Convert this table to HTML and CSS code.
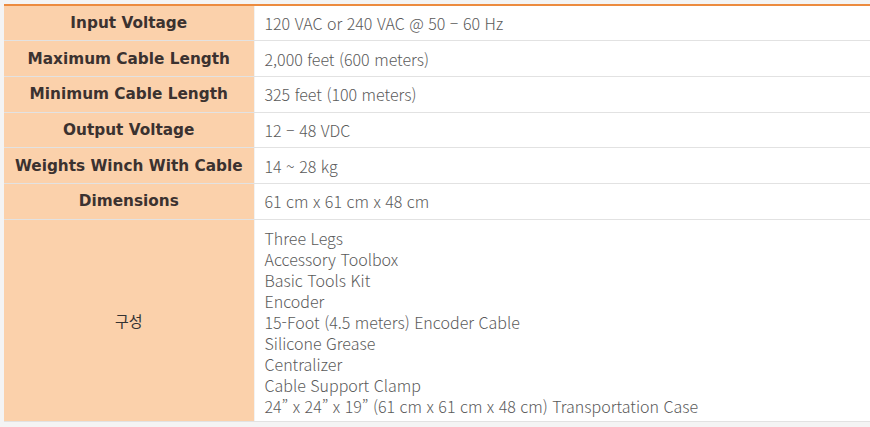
FILE: index.html
```html
<!DOCTYPE html>
<html lang="ko">
<head>
<meta charset="utf-8">
<link rel="stylesheet" href="styles.css">
</head>
<body>
<table class="spec">
  <tbody>
    <tr><th>Input Voltage</th><td>120 VAC or 240 VAC @ 50 – 60 Hz</td></tr>
    <tr><th>Maximum Cable Length</th><td>2,000 feet (600 meters)</td></tr>
    <tr><th>Minimum Cable Length</th><td>325 feet (100 meters)</td></tr>
    <tr><th>Output Voltage</th><td>12 – 48 VDC</td></tr>
    <tr><th>Weights Winch With Cable</th><td>14 ~ 28 kg</td></tr>
    <tr><th>Dimensions</th><td>61 cm x 61 cm x 48 cm</td></tr>
    <tr class="list-row">
      <th class="ko">구성</th>
      <td>Three Legs<br>Accessory Toolbox<br>Basic Tools Kit<br>Encoder<br>15-Foot (4.5 meters) Encoder Cable<br>Silicone Grease<br>Centralizer<br>Cable Support Clamp<br>24” x 24” x 19” (61 cm x 61 cm x 48 cm) Transportation Case</td>
    </tr>
  </tbody>
</table>
</body>
</html>
```

FILE: styles.css
```css
html, body {
  margin: 0;
  padding: 0;
  background: #f4f4f4;
}
body {
  padding: 4px 0 0 4px;
}
.spec {
  border-collapse: collapse;
  width: 866px;
  border-top: 2px solid #ec8b3f;
  table-layout: fixed;
}
.spec th, .spec td {
  border-bottom: 1px solid #e2e2e2;
  height: 35.7px;
  box-sizing: border-box;
  padding: 0 10px;
  vertical-align: middle;
}
.spec th {
  width: 250px;
  background: #fbd1ab;
  border-right: 1px solid #f2f2f2;
  font-family: "DejaVu Sans", sans-serif;
  font-weight: bold;
  font-size: 15.3px;
  color: #3b3230;
  text-align: center;
}
.spec td {
  background: #ffffff;
  font-family: "Noto Sans CJK KR", "Noto Sans", sans-serif;
  font-weight: 300;
  font-size: 16px;
  color: #5a5a5a;
  text-align: left;
}
.spec th.ko {
  font-family: "Noto Sans CJK KR", sans-serif;
  font-weight: 400;
  font-size: 15px;
  color: #333;
}
.list-row th, .list-row td {
  height: 201px;
}
.list-row td {
  line-height: 21px;
  padding-top: 8px;
  padding-bottom: 4px;
}
```
